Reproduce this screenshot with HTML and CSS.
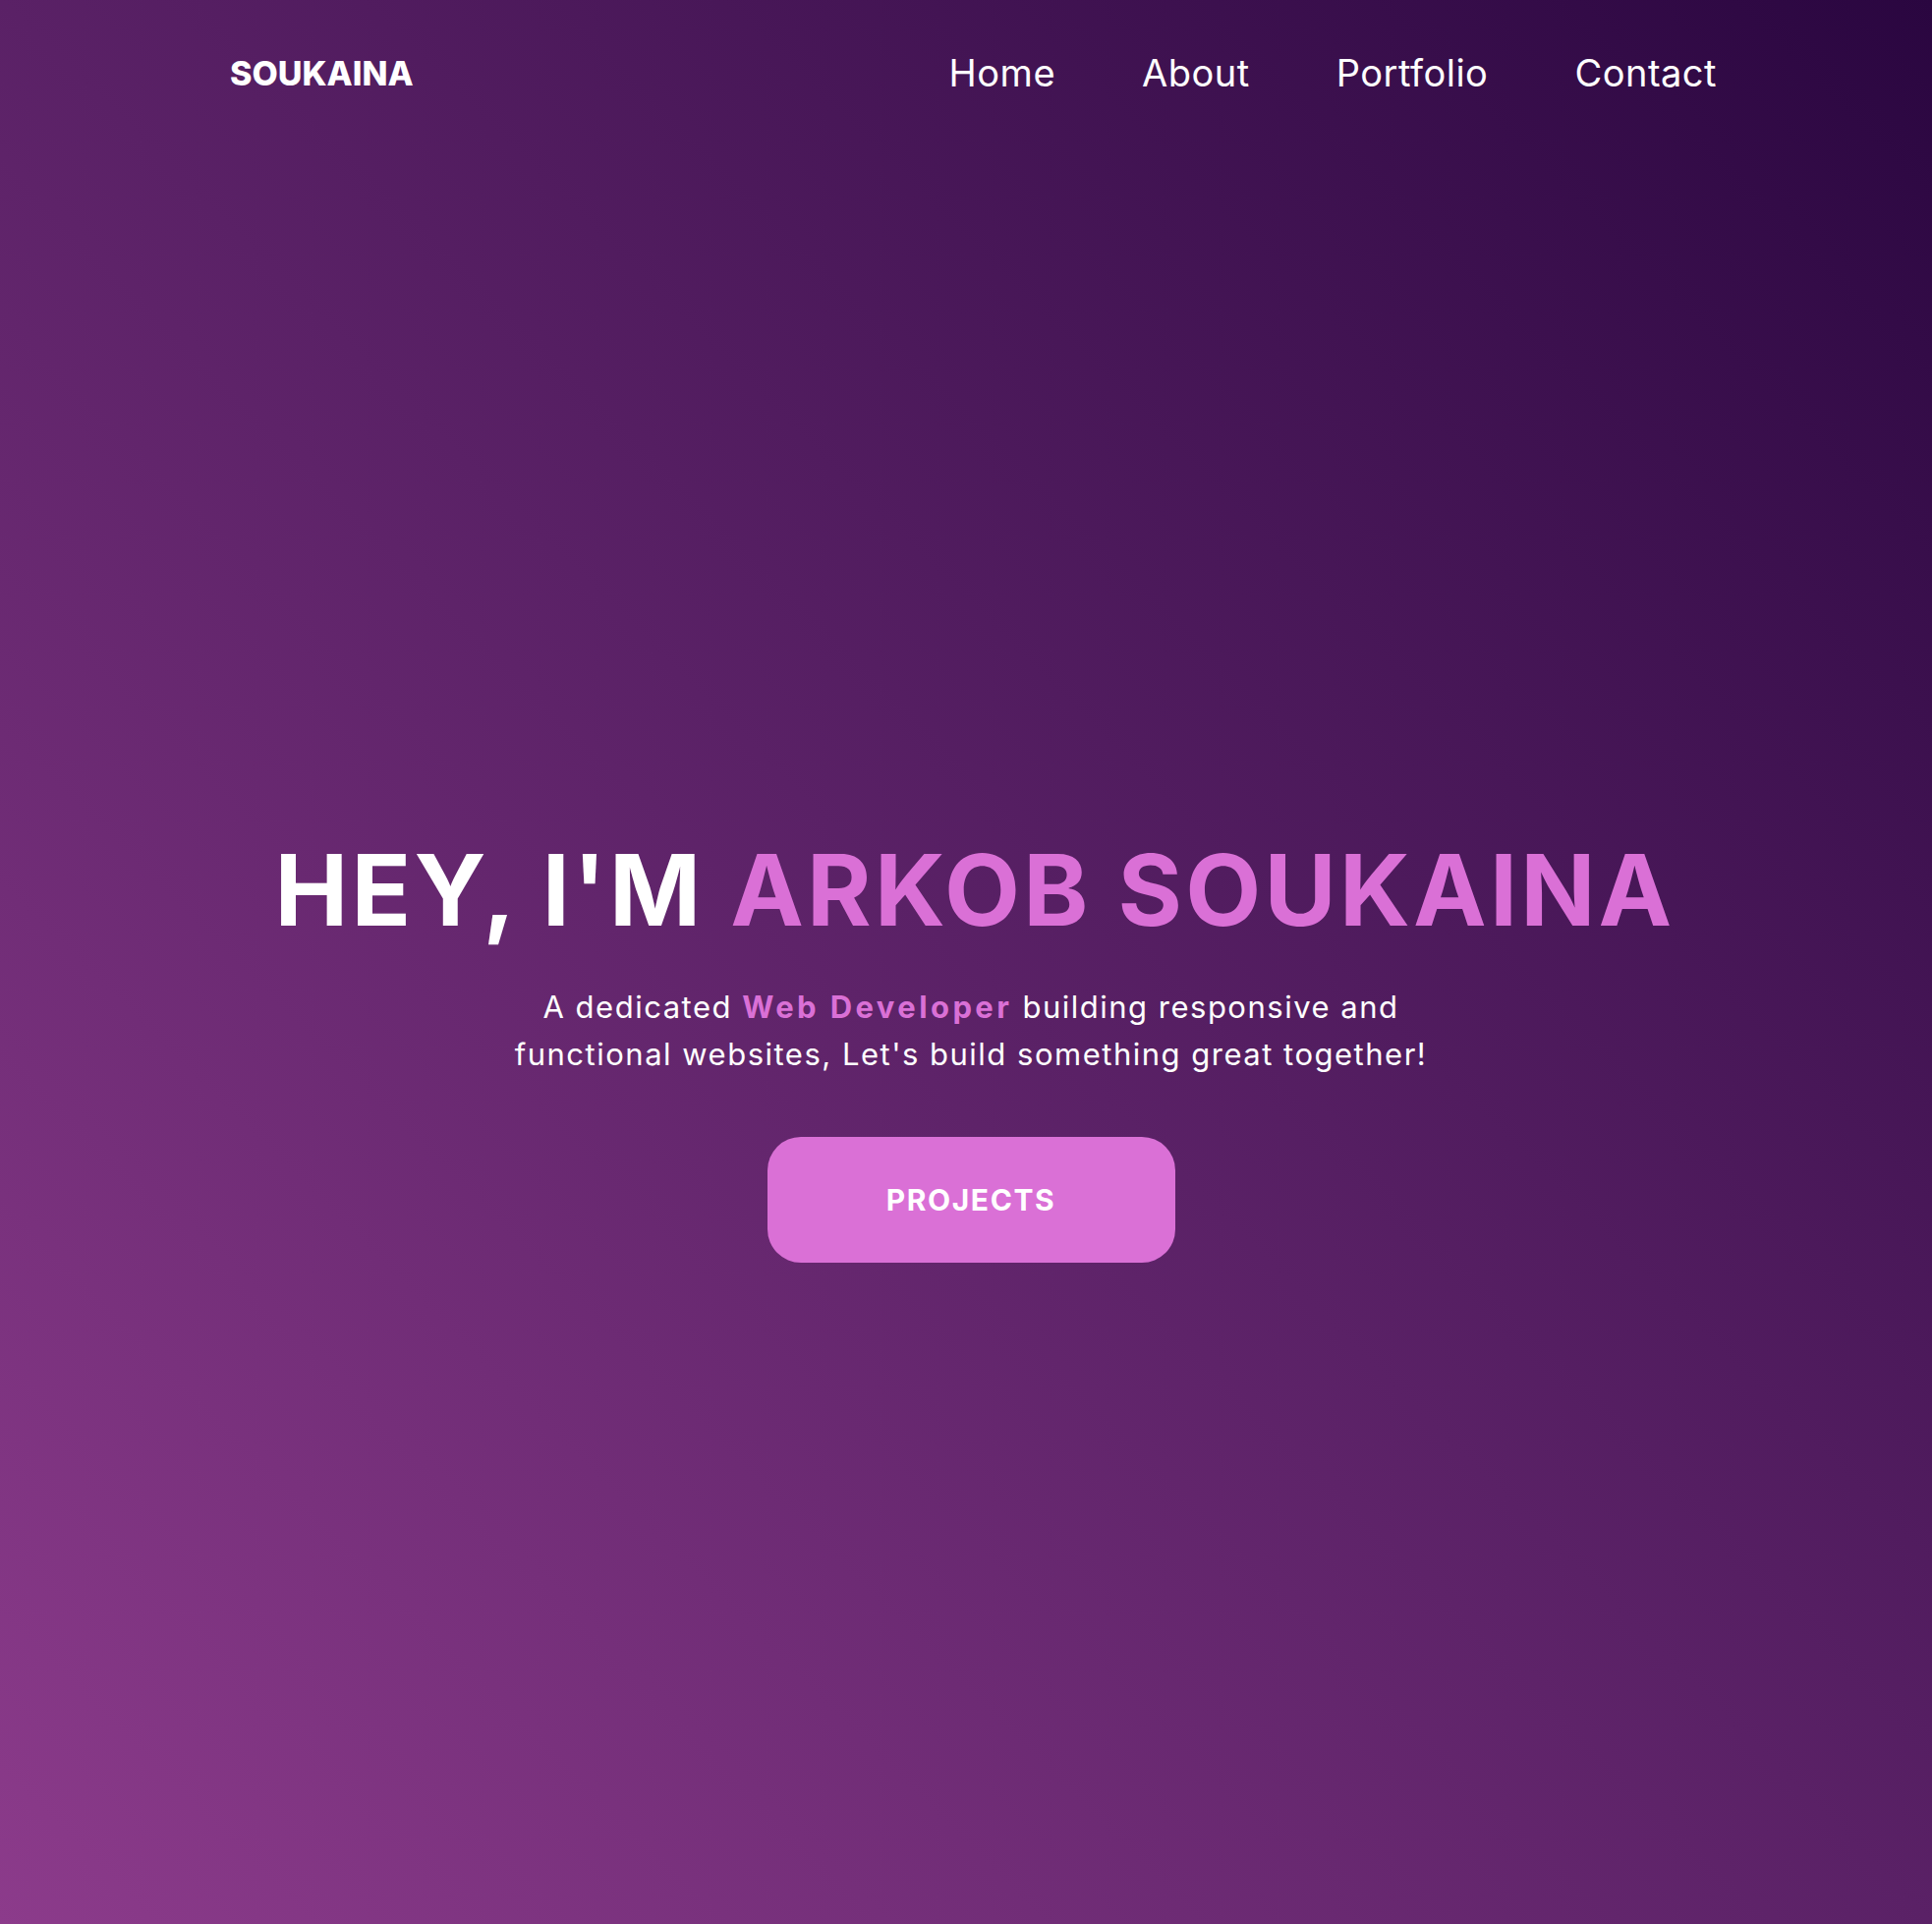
FILE: index.html
```html
<!DOCTYPE html>
<html lang="en">
<head>
<meta charset="utf-8">
<title>Soukaina</title>
<link rel="stylesheet" href="styles.css">
</head>
<body>
<div class="page">
  <header class="header">
    <div class="logo">SOUKAINA</div>
    <nav class="nav">
      <a href="#" class="nav-link">Home</a>
      <a href="#" class="nav-link">About</a>
      <a href="#" class="nav-link">Portfolio</a>
      <a href="#" class="nav-link">Contact</a>
    </nav>
  </header>
  <main class="hero">
    <h1 class="title">HEY, I'M <span class="accent">ARKOB SOUKAINA</span></h1>
    <p class="intro">A dedicated <strong class="accent">Web Developer</strong> building responsive and<br>functional websites, Let's build something great together!</p>
    <a href="#" class="btn">PROJECTS</a>
  </main>
</div>
</body>
</html>
```

FILE: styles.css
```css
* { box-sizing: border-box; }
html, body { margin: 0; padding: 0; }
body {
  font-family: "Inter", "Noto Sans", sans-serif;
  color: #ffffff;
}
.page {
  min-height: 100vh;
  display: flex;
  flex-direction: column;
  background: linear-gradient(to top right, #8c3b8b 0%, #5a2166 50%, #2a0640 100%);
}
.header {
  display: flex;
  justify-content: space-between;
  align-items: center;
  height: 148px;
  padding: 0 219px 0 234px;
}
.logo {
  font-size: 34px;
  font-weight: 800;
  letter-spacing: 0;
}
.nav {
  display: flex;
  gap: 88px;
}
.nav-link {
  color: #ffffff;
  text-decoration: none;
  font-size: 38px;
  font-weight: 400;
  letter-spacing: 0.5px;
}
.hero {
  flex: 1;
  display: flex;
  flex-direction: column;
  align-items: center;
  padding: 696px 0 0 10px;
}
.title {
  margin: 0 0 0 8px;
  font-size: 100px;
  font-weight: 700;
  line-height: 124px;
  letter-spacing: 3.2px;
}
.accent { color: #da70d6; }
.intro {
  margin: 33px 0 0;
  font-size: 31px;
  line-height: 48px;
  letter-spacing: 1.5px;
  text-align: center;
  font-weight: 400;
}
.intro strong {
  font-weight: 700;
  letter-spacing: 3.4px;
}
.btn {
  margin-top: 60px;
  display: flex;
  align-items: center;
  justify-content: center;
  width: 415px;
  height: 128px;
  border-radius: 34px;
  background: #da70d6;
  color: #ffffff;
  text-decoration: none;
  font-size: 30px;
  font-weight: 700;
  letter-spacing: 1.6px;
}
```
